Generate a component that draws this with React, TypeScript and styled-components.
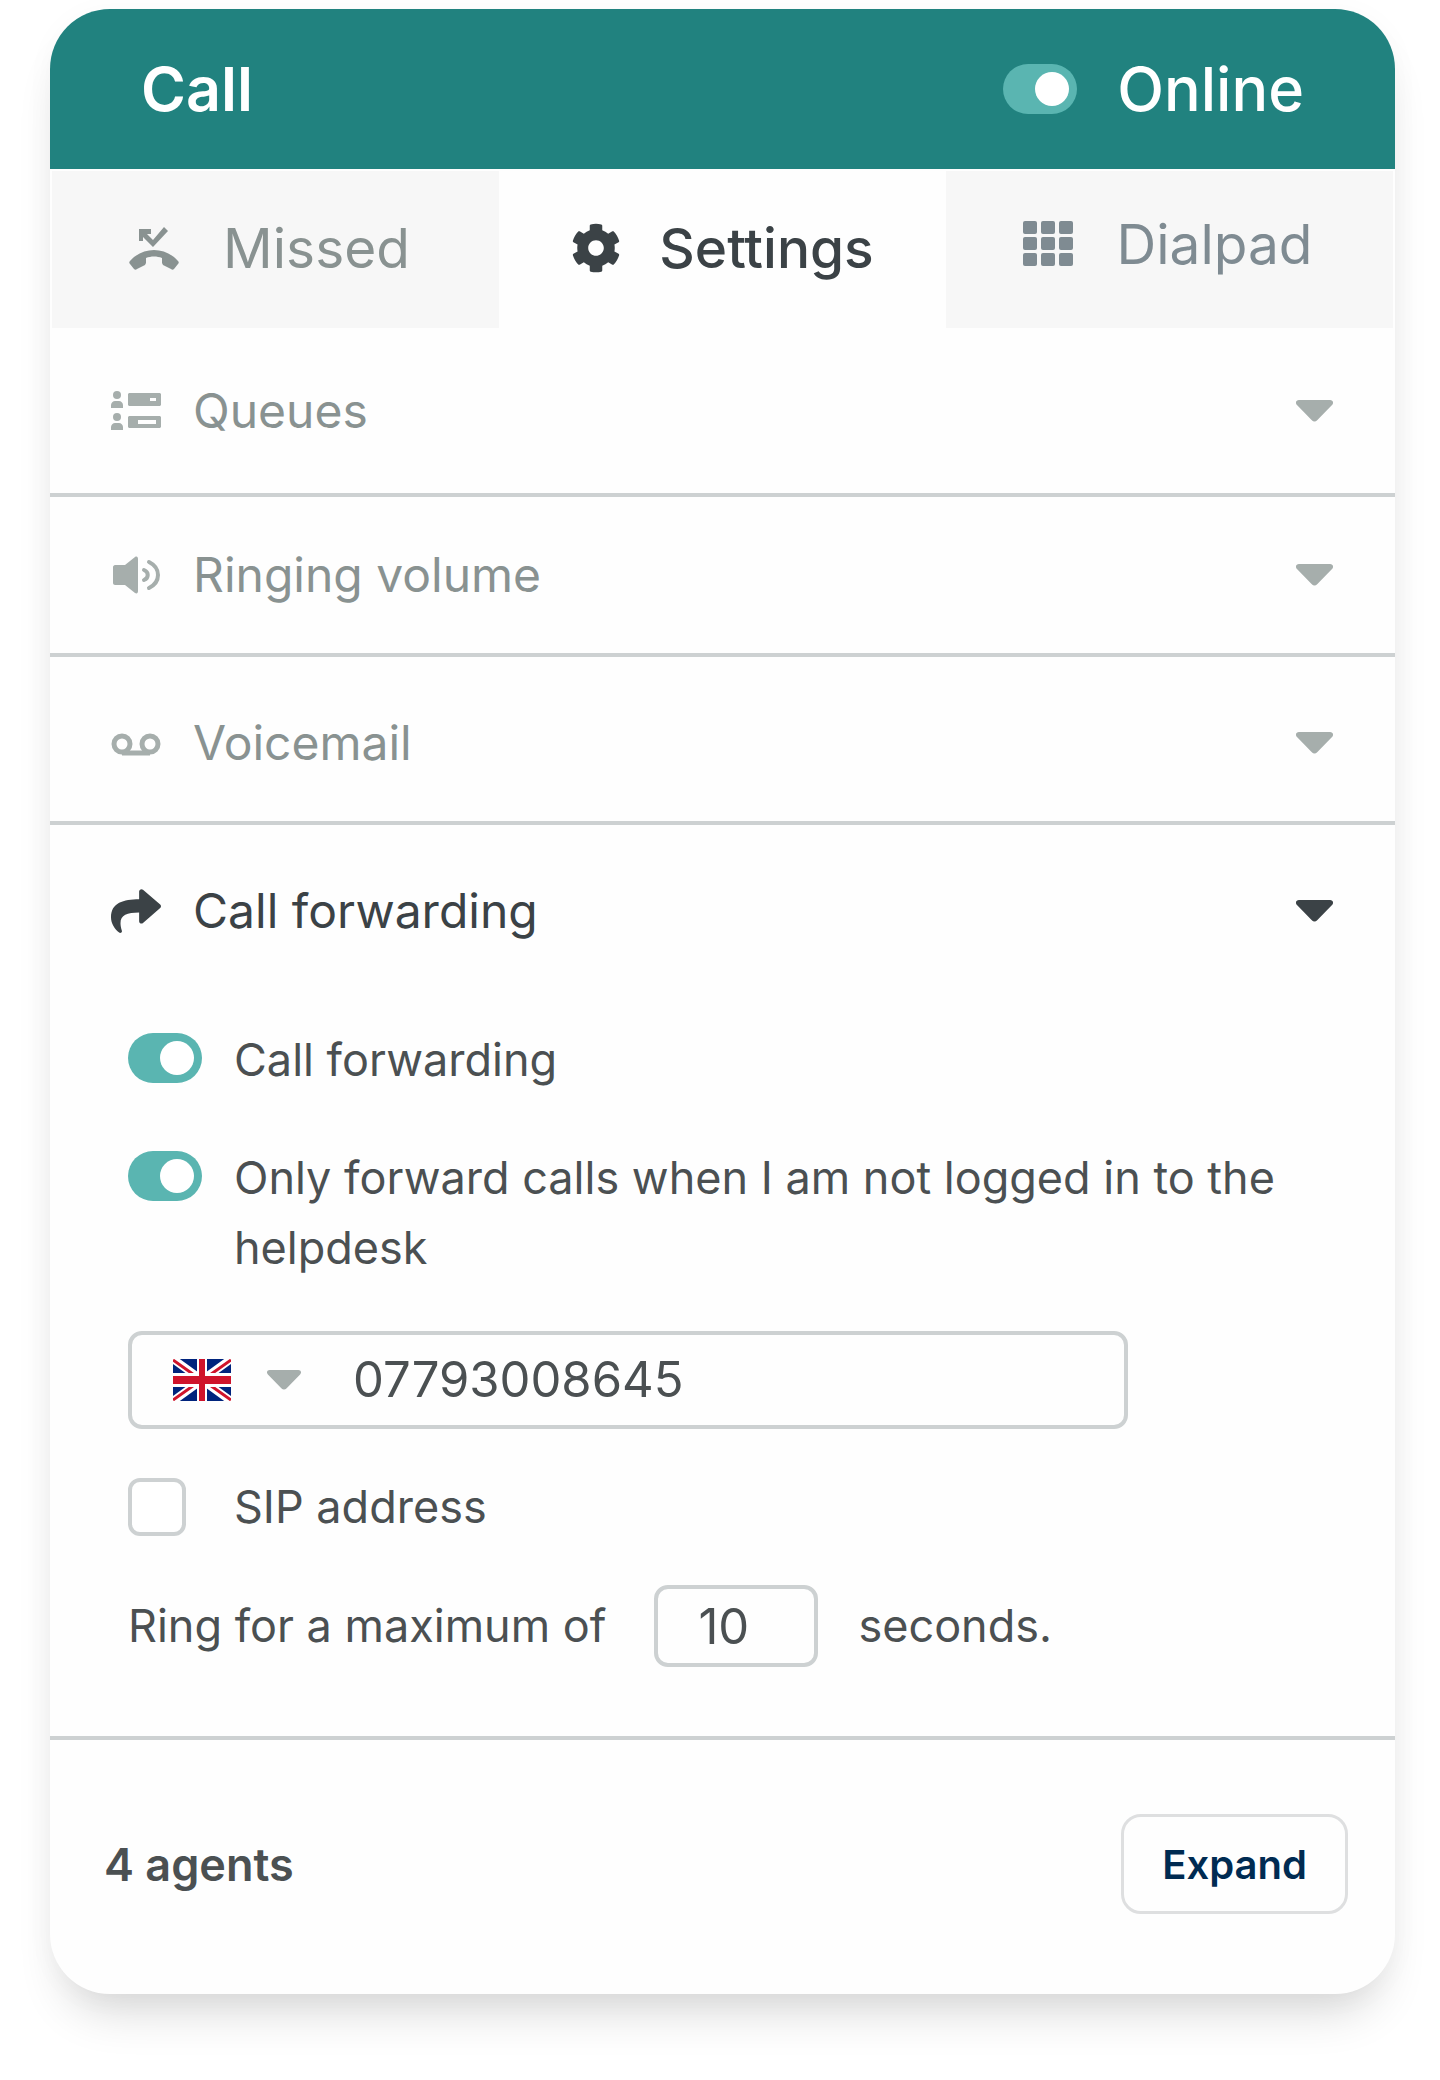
import React from "react";
import styled, { createGlobalStyle } from "styled-components";
import { FaShare, FaCog } from "react-icons/fa";

const Global = createGlobalStyle`
  *, *::before, *::after { box-sizing: border-box; }
  body { margin: 0; background: #fff; font-family: Inter, "Liberation Sans", sans-serif; color: #4b5052; }
  button, input, select { font: inherit; color: inherit; }
`;

const Page = styled.div`
  padding: 9px 45px 86px 50px;
`;

const Card = styled.main`
  background: #fefefe;
  border-radius: 60px;
  box-shadow: 0 32px 48px -16px rgba(0, 0, 0, 0.16), 0 4px 30px rgba(0, 0, 0, 0.03);
`;

const Header = styled.header`
  display: flex;
  align-items: center;
  justify-content: space-between;
  height: 160px;
  padding: 0 91px;
  border-radius: 60px 60px 0 0;
  background: #21827f;
  color: #fff;
  font-size: 61px;
  line-height: 72px;
`;

const Title = styled.h1`
  margin: 0;
  font-size: inherit;
  font-weight: 600;
`;

const Status = styled.label`
  display: flex;
  align-items: center;
  gap: 40px;
  font-weight: 500;
`;

const Toggle = styled.input.attrs({ type: "checkbox", role: "switch" })`
  appearance: none;
  flex: none;
  display: flex;
  align-items: center;
  width: 74px;
  height: 50px;
  margin: 0;
  padding: 0 8px;
  border-radius: 25px;
  background: #b9c1c0;

  &::before {
    content: "";
    width: 34px;
    height: 34px;
    border-radius: 50%;
    background: #fff;
  }
  &:checked {
    justify-content: flex-end;
    background: #5ab5b1;
  }
`;

const Tabs = styled.nav`
  display: grid;
  grid-template-columns: repeat(3, 1fr);
  padding: 2px 2px 0;
`;

const Tab = styled.button<{ $active?: boolean; $color: string; $padding: string }>`
  display: flex;
  align-items: center;
  justify-content: center;
  gap: ${(p) => (p.$active ? 38 : 44)}px;
  height: 157px;
  padding: ${(p) => p.$padding};
  border: 0;
  background: ${(p) => (p.$active ? "#fefefe" : "#f7f7f7")};
  color: ${(p) => p.$color};
  font-size: 55px;
  font-weight: ${(p) => (p.$active ? 500 : 400)};
`;

const Section = styled.section`
  border-bottom: 4px solid #cdd1d2;
`;

const SectionHead = styled.button<{ $top: number; $bottom: number; $open?: boolean }>`
  display: flex;
  align-items: center;
  width: 100%;
  padding: ${(p) => p.$top}px 62px ${(p) => p.$bottom}px 61px;
  border: 0;
  background: none;
  color: ${(p) => (p.$open ? "#3b4246" : "#899291")};
  font-size: 48px;
  line-height: 60px;
  text-align: left;

  > svg {
    flex: none;
    color: ${(p) => (p.$open ? "#3b4246" : "#a6aeac")};
  }
`;

const SectionName = styled.span`
  flex: 1;
  padding-left: 32px;
`;

const Panel = styled.div`
  display: flex;
  flex-direction: column;
  gap: 48px;
  padding: 84px 78px 69px;
  font-size: 45px;
  line-height: 70px;
`;

const SwitchRow = styled.label`
  display: flex;
  align-items: flex-start;
  gap: 32px;

  ${Toggle} { margin-top: 8px; }
`;

const PhoneField = styled.div`
  display: flex;
  align-items: center;
  width: 1000px;
  max-width: 100%;
  height: 98px;
  border: 4px solid #cdd1d2;
  border-radius: 14px;
`;

const Country = styled.label`
  position: relative;
  display: flex;
  align-items: center;
  gap: 36px;
  padding: 0 52px 0 41px;
  color: #a6aeac;
`;

const CountrySelect = styled.select`
  position: absolute;
  inset: 0;
  width: 100%;
  opacity: 0;
`;

const PhoneInput = styled.input`
  flex: 1;
  min-width: 0;
  padding: 0;
  border: 0;
  outline: 0;
  background: none;
  font-size: 49px;
`;

const CheckRow = styled.label`
  display: flex;
  align-items: center;
  gap: 48px;
  line-height: 60px;
`;

const CheckBox = styled.input.attrs({ type: "checkbox" })`
  appearance: none;
  width: 58px;
  height: 58px;
  margin: 0;
  border: 4px solid #cdd1d2;
  border-radius: 12px;
  background: #fff;
  &:checked { background: #5ab5b1; }
`;

const RingRow = styled.div`
  display: flex;
  align-items: center;
`;

const SecondsInput = styled.input`
  width: 164px;
  height: 82px;
  margin: 0 40px 0 48px;
  padding: 0 0 0 40px;
  border: 4px solid #cdd1d2;
  border-radius: 14px;
  background: none;
  font-size: 49px;
`;

const Footer = styled.footer`
  display: flex;
  align-items: center;
  justify-content: space-between;
  padding: 74px 47px 80px 54px;
`;

const Agents = styled.strong`
  font-size: 45px;
  font-weight: 600;
`;

const ExpandButton = styled.button`
  height: 100px;
  padding: 0 38px;
  border: 3px solid #dedfe0;
  border-radius: 20px;
  background: #fefefe;
  color: #002b52;
  font-size: 40px;
  font-weight: 600;
`;

const Caret = ({ width = 37, height = 22 }: { width?: number; height?: number }) => (
  <svg width={width} height={height} viewBox="0 0 38 22" preserveAspectRatio="none" aria-hidden="true">
    <path d="M3 0h32c3 0 4 3 2 5L22 20c-2 2-4 2-6 0L1 5C-1 3 0 0 3 0z" fill="currentColor" />
  </svg>
);

const MissedIcon = () => (
  <svg width="50" height="46" viewBox="0 0 50 46" fill="currentColor" aria-hidden="true">
    <path d="M10 4h12v5h-4l6 6L35 2l4 4-15 16L14 12v4h-4z" />
    <path d="M25 25c9 0 18 4 24 11 1 1 1 2 0 3l-4 5c-1 1-2 1-3 0l-8-4-1-2v-5c-5-2-11-2-16 0v5l-1 2-8 4c-1 1-2 1-3 0l-4-5c-1-1-1-2 0-3 6-7 15-11 24-11z" />
  </svg>
);

const DialpadIcon = () => (
  <svg width="50" height="46" viewBox="0 0 50 46" fill="currentColor" aria-hidden="true">
    {[0, 16, 32].map((y) =>
      [0, 18, 36].map((x) => <rect key={`${x}-${y}`} x={x} y={y} width="14" height="13" rx="2" />)
    )}
  </svg>
);

const QueuesIcon = () => (
  <svg width="50" height="40" viewBox="0 0 50 40" fill="currentColor" aria-hidden="true">
    <circle cx="6" cy="4" r="4" />
    <path d="M0 17v-3c0-2 2-4 4-4h4c2 0 4 2 4 4v3z" />
    <circle cx="6" cy="26" r="4" />
    <path d="M0 39v-3c0-2 2-4 4-4h4c2 0 4 2 4 4v3z" />
    <path fillRule="evenodd" d="M18 2h31l1 1v11l-1 1H18l-1-1V3zM39 7v3h6V7z" />
    <path fillRule="evenodd" d="M18 25h31l1 1v10l-1 1H18l-1-1V26zM27 29v4h18v-4z" />
  </svg>
);

const VolumeIcon = () => (
  <svg width="50" height="38" viewBox="0 0 50 38" fill="none" stroke="currentColor" strokeWidth="4" strokeLinecap="round" aria-hidden="true">
    <path d="M4 9h10L24 1c2-1 3 0 3 2v32c0 2-1 3-3 2l-10-8H4c-1 0-2-1-2-2V11c0-1 1-2 2-2z" fill="currentColor" stroke="none" />
    <path d="M33 14c5 2 5 8 0 10M38 6c12 6 12 20 0 26" />
  </svg>
);

const VoicemailIcon = () => (
  <svg width="50" height="26" viewBox="0 0 50 26" fill="none" stroke="currentColor" strokeWidth="5" aria-hidden="true">
    <circle cx="11" cy="14" r="8" />
    <circle cx="39" cy="14" r="8" />
    <path d="M11 23h28" />
  </svg>
);

const FlagUK = () => (
  <svg width="58" height="42" viewBox="0 0 58 42" aria-hidden="true">
    <path fill="#00247d" d="M0 0h58v42H0z" />
    <path stroke="#fff" strokeWidth="8" d="M0 0l58 42M58 0L0 42" />
    <path stroke="#cf142b" strokeWidth="3" d="M0 1l24 17M58 41L34 24M58 1L34 18M0 41l24-17" />
    <path fill="#fff" d="M24 0h10v42H24zM0 14h58v14H0z" />
    <path fill="#cf142b" d="M26 0h6v42h-6zM0 17h58v8H0z" />
  </svg>
);

const sections = [
  { name: "Queues", icon: <QueuesIcon />, top: 53, bottom: 52 },
  { name: "Ringing volume", icon: <VolumeIcon />, top: 48, bottom: 48 },
  { name: "Voicemail", icon: <VoicemailIcon />, top: 56, bottom: 48 },
];

export default function App() {
  return (
    <>
      <Global />
      <Page>
        <Card>
          <Header>
            <Title>Call</Title>
            <Status>
              <Toggle defaultChecked />
              Online
            </Status>
          </Header>
          <Tabs>
            <Tab $color="#899291" $padding="0 12px 4px 0">
              <MissedIcon />
              Missed
            </Tab>
            <Tab $active $color="#3b4246" $padding="0 0 4px">
              <FaCog size={50} />
              Settings
            </Tab>
            <Tab $color="#7f8b92" $padding="0 4px 12px 0">
              <DialpadIcon />
              Dialpad
            </Tab>
          </Tabs>
          {sections.map((s) => (
            <Section key={s.name}>
              <SectionHead $top={s.top} $bottom={s.bottom} aria-expanded={false}>
                {s.icon}
                <SectionName>{s.name}</SectionName>
                <Caret />
              </SectionHead>
            </Section>
          ))}
          <Section>
            <SectionHead $top={56} $bottom={0} $open aria-expanded>
              <FaShare size={50} />
              <SectionName>Call forwarding</SectionName>
              <Caret />
            </SectionHead>
            <Panel>
              <SwitchRow>
                <Toggle defaultChecked />
                <span>Call forwarding</span>
              </SwitchRow>
              <SwitchRow>
                <Toggle defaultChecked />
                <span>Only forward calls when I am not logged in to the helpdesk</span>
              </SwitchRow>
              <PhoneField>
                <Country>
                  <FlagUK />
                  <Caret width={34} height={20} />
                  <CountrySelect aria-label="Country" defaultValue="gb">
                    <option value="gb">UK</option>
                  </CountrySelect>
                </Country>
                <PhoneInput type="tel" aria-label="Phone number" defaultValue="07793008645" />
              </PhoneField>
              <CheckRow>
                <CheckBox />
                SIP address
              </CheckRow>
              <RingRow>
                <label htmlFor="ring-seconds">Ring for a maximum of</label>
                <SecondsInput id="ring-seconds" type="text" inputMode="numeric" defaultValue="10" />
                <span>seconds.</span>
              </RingRow>
            </Panel>
          </Section>
          <Footer>
            <Agents>4 agents</Agents>
            <ExpandButton>Expand</ExpandButton>
          </Footer>
        </Card>
      </Page>
    </>
  );
}
